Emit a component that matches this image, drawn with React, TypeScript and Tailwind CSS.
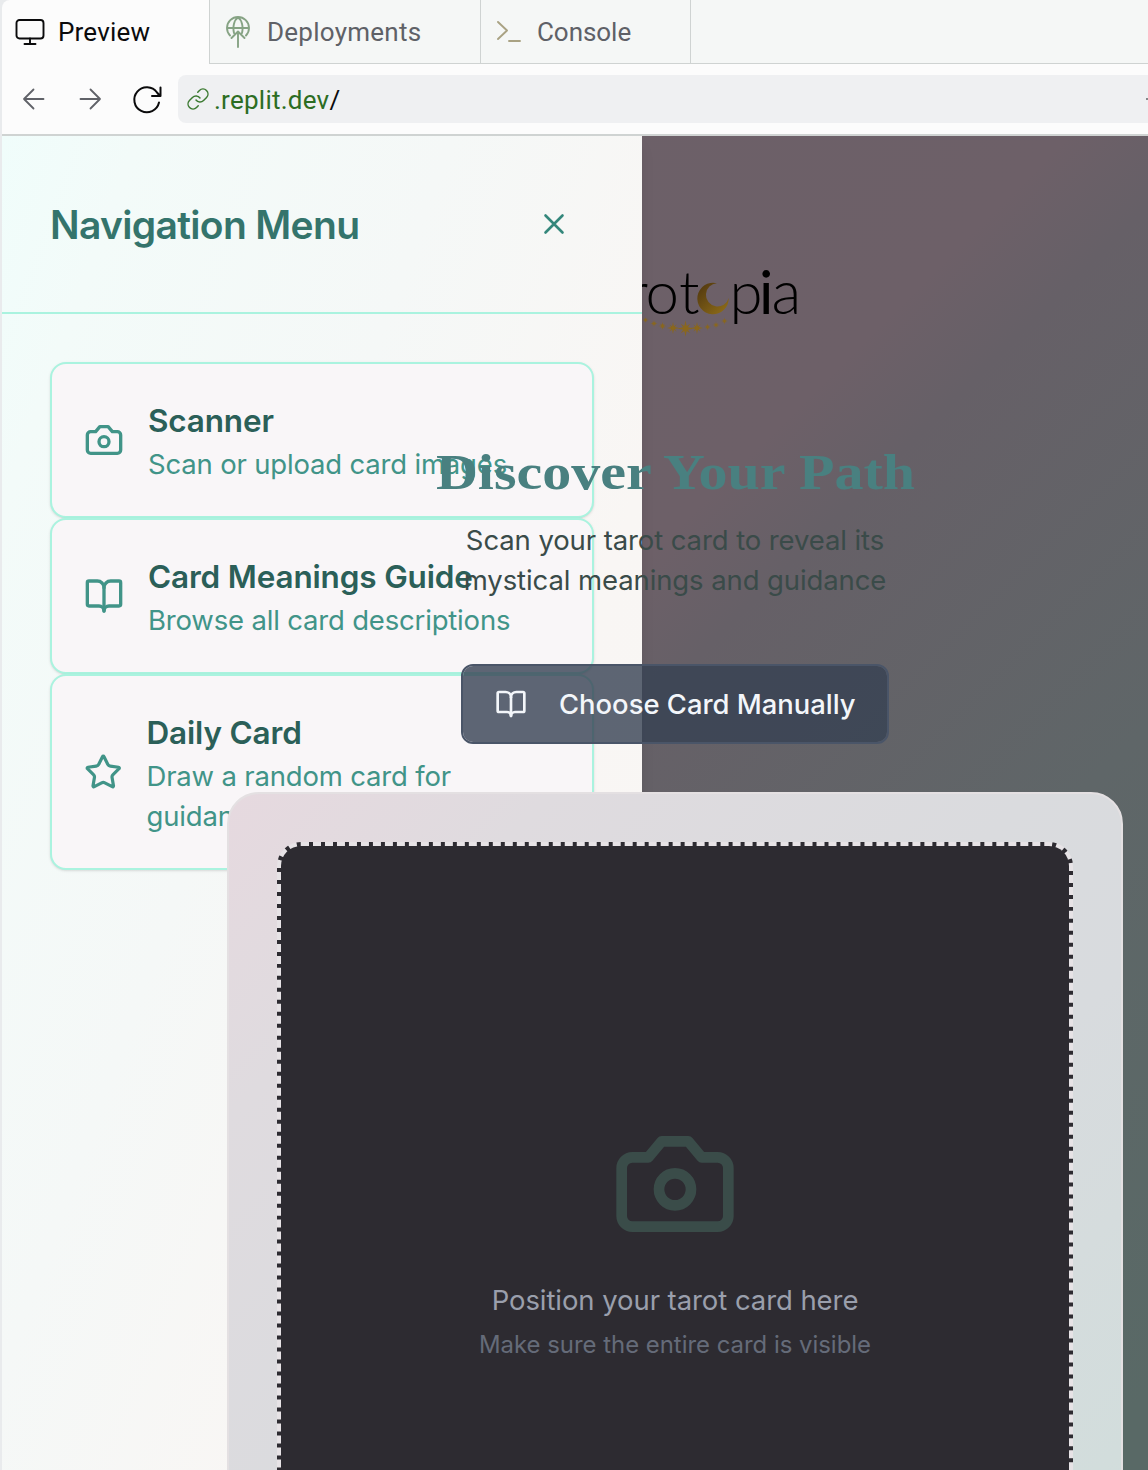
import React from "react";
import { BookOpen, Star } from "lucide-react";

function Camera({ className }: { className: string }) {
  return (
    <svg viewBox="0 0 24 24" fill="none" stroke="currentColor" strokeWidth="2" strokeLinecap="round" strokeLinejoin="round" className={className}>
      <path d="M14.5 4h-5L7 7H4a2 2 0 0 0-2 2v9a2 2 0 0 0 2 2h16a2 2 0 0 0 2-2V9a2 2 0 0 0-2-2h-3l-2.5-3z" />
      <circle cx="12" cy="13" r="3" />
    </svg>
  );
}

function Tabs() {
  return (
    <div className="flex h-16 font-[Roboto,sans-serif] text-[26px] text-[#5f6167]">
      <div className="flex w-[207px] shrink-0 items-center rounded-tl-lg bg-[#fcfcfc] pl-[13px] text-[#0b0b0c]">
        <svg className="h-8 w-[30px]" viewBox="0 0 30 32" fill="none" stroke="currentColor" strokeWidth="1.9" strokeLinecap="round">
          <rect x="1.500" y="4" width="27" height="18.500" rx="3" />
          <path d="M15 22.500V28M9.500 28h11" />
        </svg>
        <span className="ml-[13px] tracking-[0.2px]">Preview</span>
      </div>
      <div className="flex w-[271px] shrink-0 items-center border-b border-l border-[#cfd3d2] bg-[#f5f7f6] pt-px pl-4">
        <svg className="h-8 w-6" viewBox="0 0 24 32" fill="none" stroke="#86a384" strokeWidth="1.9" strokeLinecap="round" strokeLinejoin="round">
          <path d="M4 19.500A11 11 0 1 1 20 19.500M1.500 12h21M8 17C6.500 11 8 4 12 1.500C16 4 17.500 11 16 17M12 31V16M5.500 22L12 15.500L18.500 22" />
        </svg>
        <span className="ml-[17px] tracking-[0.25px]">Deployments</span>
      </div>
      <div className="flex w-[210px] shrink-0 items-center border-b border-l border-[#cfd3d2] bg-[#f5f7f6] pt-px pl-4">
        <svg className="h-8 w-6" viewBox="0 0 24 32" fill="none" stroke="#a9a283" strokeWidth="1.9" strokeLinecap="round" strokeLinejoin="round">
          <path d="M1 6l9 8.500l-9 8.500M12 25h11" />
        </svg>
        <span className="ml-4 tracking-[-0.05px]">Console</span>
      </div>
      <div className="flex-1 border-b border-l border-[#cfd3d2] bg-[#f5f7f6]" />
    </div>
  );
}

function AddressBar() {
  return (
    <div className="flex h-[72px] items-center border-b-2 border-[#cfd3d2] bg-[#fcfcfc] pl-5">
      <svg className="h-6 w-6" viewBox="0 0 24 24" fill="none" stroke="#606268" strokeWidth="1.8" strokeLinecap="round" strokeLinejoin="round">
        <path d="M21.500 12H2M11.500 2.500L2 12l9.500 9.500" />
      </svg>
      <svg className="ml-8 h-6 w-6" viewBox="0 0 24 24" fill="none" stroke="#606268" strokeWidth="1.800" strokeLinecap="round" strokeLinejoin="round">
        <path d="M2.500 12H22M12.500 2.500L22 12l-9.500 9.500" />
      </svg>
      <svg className="ml-7 h-8 w-8" viewBox="0 0 32 32" fill="none" stroke="#0b0b0c" strokeWidth="2" strokeLinecap="round" strokeLinejoin="round">
        <path d="M29 19.500A12.500 12.500 0 1 1 27 9.500L30 13M30.500 4.500V13H22" />
      </svg>
      <div className="ml-4 flex h-12 flex-1 items-center overflow-hidden rounded-l-lg bg-[#eff0f2] pl-2 font-[Roboto,sans-serif] text-[26px]">
        <svg className="h-6 w-6" viewBox="0 0 24 24" fill="none" stroke="#3c7a32" strokeWidth="1.500" strokeLinecap="round" strokeLinejoin="round">
          <path d="M10 13a5 5 0 0 0 7.540.54l3-3a5 5 0 0 0-7.070-7.070l-1.720 1.710" />
          <path d="M14 11a5 5 0 0 0-7.540-.54l-3 3a5 5 0 0 0 7.070 7.070l1.710-1.710" />
        </svg>
        <span className="ml-1 pt-[3px] tracking-[0.25px] text-[#2c6d23]">.replit.dev</span>
        <span className="pt-[3px] text-[#0b0b0c]">/</span>
        <span className="ml-auto h-0.5 w-0.5 bg-[#85878a]" />
      </div>
    </div>
  );
}

function MenuItem({ icon, title, children }: { icon: React.ReactNode; title: string; children: React.ReactNode }) {
  return (
    <div className="flex items-center gap-6 rounded-2xl border-2 border-[#aaf3df] bg-[#f9f6f8] p-8 text-[#419488] shadow-sm">
      {icon}
      <div>
        <div className="pt-0.5 text-[31.500px] leading-[46px] font-semibold tracking-[-0.17px] whitespace-nowrap text-[#2b5f58]">{title}</div>
        <div className="text-[27.500px] leading-10 tracking-[-0.18px] whitespace-nowrap">{children}</div>
      </div>
    </div>
  );
}

function Drawer() {
  return (
    <aside className="absolute inset-y-0 left-0 w-[640px] bg-[linear-gradient(110deg,#f0fdfb_0%,#f3fbf9_12%,#f5f8f7_40%,#f9f6f4_68%,#f9f7f5_100%)] shadow-lg">
      <div className="flex h-[178px] items-center justify-between border-b-2 border-[#aaf3df] pr-[74px] pl-12">
        <h2 className="pt-0.5 text-[39px] font-semibold tracking-[-0.67px] text-[#34746c]">Navigation Menu</h2>
        <svg className="size-7" viewBox="0 0 28 28" stroke="#34877b" strokeWidth="2.600" strokeLinecap="round">
          <path d="M5.500 5.500l17 17M22.500 5.500l-17 17" />
        </svg>
      </div>
      <nav className="flex flex-col p-12">
        <MenuItem title="Scanner" icon={<Camera className="size-10 shrink-0" />}>Scan or upload card images</MenuItem>
        <MenuItem title="Card Meanings Guide" icon={<BookOpen className="size-10 shrink-0" />}>Browse all card descriptions</MenuItem>
        <MenuItem title="Daily Card" icon={<Star className="size-[38.500px] shrink-0" />}>
          Draw a random card for
          <br />
          guidance
        </MenuItem>
      </nav>
    </aside>
  );
}

function Spark({ x, y, r }: { x: number; y: number; r: number }) {
  const d = r * 0.6;
  const i = r * 0.15;
  return (
    <path
      transform={`translate(${x} ${y})`}
      fill="#8a671d"
      d={`M0 ${-r}L${i} ${-2 * i}L${d} ${-d}L${2 * i} ${-i}L${r} 0L${2 * i} ${i}L${d} ${d}L${i} ${2 * i}L0 ${r}L${-i} ${2 * i}L${-d} ${d}L${-2 * i} ${i}L${-r} 0L${-2 * i} ${-i}L${-d} ${-d}L${-i} ${-2 * i}Z`}
    />
  );
}

function Logo() {
  return (
    <svg className="h-[100px] w-[260px]" viewBox="560 250 260 100" fontFamily="Lato, sans-serif" fontWeight="300" fontSize="60">
      <defs>
        <linearGradient id="moon" x1="0" y1="0" x2="1" y2="1">
          <stop offset="0" stopColor="#4e350f" />
          <stop offset="1" stopColor="#927019" />
        </linearGradient>
      </defs>
      <text x="627 645.500 679" y="313.500">rot</text>
      <text y="313.500">
        <tspan x="729.500">p</tspan>
        <tspan x="759" fontWeight="400">i</tspan>
        <tspan x="771.500" fontSize="61.500">a</tspan>
      </text>
      <path fill="url(#moon)" d="M717 283.300A15.700 15.700 0 1 0 728.700 298A11.600 11.600 0 1 1 717 283.300Z" />
      <Spark x={645.5} y={320} r={3} />
      <Spark x={654} y={323.500} r={3.500} />
      <Spark x={662.500} y={326} r={4} />
      <Spark x={673} y={328} r={6} />
      <Spark x={685.500} y={328.500} r={8} />
      <Spark x={697} y={328} r={6} />
      <Spark x={707.500} y={327} r={3.500} />
      <Spark x={716} y={325} r={3.500} />
      <Spark x={724.500} y={321} r={3.500} />
    </svg>
  );
}

function Scanner() {
  return (
    <main className="relative flex w-[1346px] flex-col items-center">
      <h1 className="mt-[301px] h-[70px] origin-center scale-x-[1.16] font-['Liberation_Serif',serif] text-[50px] leading-[70px] font-bold whitespace-nowrap text-[#498080]">
        Discover Your Path
      </h1>
      <p className="mt-[13px] text-center text-[27.500px] leading-10 tracking-[-0.1px] text-[#3a4b49]">
        Scan your tarot card to reveal its
        <br />
        mystical meanings and guidance
      </p>
      <button className="mt-16 flex h-20 w-[428px] items-center rounded-xl border-2 border-[#4a5568] bg-gray-700/80 bg-clip-padding pl-8 text-[27.400px] font-medium text-[#f3f6fa]">
        <BookOpen className="size-8" />
        <span className="ml-8 pt-0.5 whitespace-nowrap">Choose Card Manually</span>
      </button>
      <section className="mt-12 h-[896px] w-[896px] rounded-[32px] border-2 border-[#e4e0e2] bg-[linear-gradient(135deg,#e6d9df_0%,#dfdbdf_18%,#dadbde_45%,#d8dbde_60%,#cfdedb_100%)] p-12">
        <div className="flex h-full flex-col items-center justify-center rounded-3xl border-4 border-dashed border-[#e7e3e6] bg-[#2d2b31]">
          <Camera className="size-32 text-[#3a4c49]" />
          <p className="mt-8 text-[27.500px] leading-10 tracking-[-0.07px] text-[#9a9fac]">Position your tarot card here</p>
          <p className="mt-2 pt-px text-[23.900px] leading-[31px] text-[#656b79]">Make sure the entire card is visible</p>
        </div>
      </section>
    </main>
  );
}

export default function App() {
  return (
    <div className="flex h-[1470px] w-[1148px] flex-col overflow-hidden bg-[#e9ebed] pl-0.5 font-[Inter,sans-serif]">
      <Tabs />
      <AddressBar />
      <div className="relative h-[1334px] overflow-hidden bg-[linear-gradient(135deg,#6b6068_0%,#6d6068_43%,#666067_49%,#5f6668_70%,#596966_97%)]">
        <div className="absolute top-[114px] left-[558px]">
          <Logo />
        </div>
        <Drawer />
        <Scanner />
      </div>
    </div>
  );
}
